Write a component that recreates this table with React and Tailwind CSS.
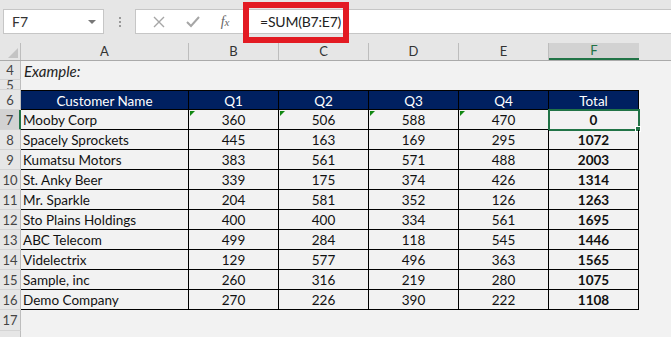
const COLS = [
  { key: "A", w: "w-[168px]" },
  { key: "B", w: "w-[90px]" },
  { key: "C", w: "w-[90px]" },
  { key: "D", w: "w-[90px]" },
  { key: "E", w: "w-[90px]" },
  { key: "F", w: "w-[90px]" },
]

const ROWS = [
  [7, "Mooby Corp", 360, 506, 588, 470, 0],
  [8, "Spacely Sprockets", 445, 163, 169, 295, 1072],
  [9, "Kumatsu Motors", 383, 561, 571, 488, 2003],
  [10, "St. Anky Beer", 339, 175, 374, 426, 1314],
  [11, "Mr. Sparkle", 204, 581, 352, 126, 1263],
  [12, "Sto Plains Holdings", 400, 400, 334, 561, 1695],
  [13, "ABC Telecom", 499, 284, 118, 545, 1446],
  [14, "Videlectrix", 129, 577, 496, 363, 1565],
  [15, "Sample, inc", 260, 316, 219, 280, 1075],
  [16, "Demo Company", 270, 226, 390, 222, 1108],
]

function RowHead({ n, h, active }) {
  return (
    <div
      className={`${h} w-[21px] shrink-0 flex items-center justify-center pt-[2px] overflow-hidden border-b border-[#d4d4d4] text-[13px] text-[#444] ${
        active ? "bg-[#d2d2d2] border-r-2 border-r-[#217346]" : "bg-[#e6e6e6] border-r border-r-[#bdbdbd]"
      }`}
    >
      {n}
    </div>
  )
}

function ErrTri() {
  return (
    <span className="absolute left-[1px] top-[1px] w-0 h-0 border-t-[5px] border-t-[#118811] border-r-[5px] border-r-transparent" />
  )
}

export default function App() {
  return (
    <div className="w-[671px] h-[337px] overflow-hidden bg-[#f2f2f2] font-['Lato','Open_Sans',sans-serif] text-[#222] relative">
      {/* Formula bar */}
      <div className="h-[43px] bg-[#e6e6e6] flex items-start pt-[9px]">
        <div className="ml-[3px] w-[101px] h-[25px] bg-white border border-[#c6c6c6] flex items-center justify-between pl-[8px] pr-[7px]">
          <span className="text-[14px] text-[#333]">F7</span>
          <span className="w-0 h-0 border-l-[4px] border-l-transparent border-r-[4px] border-r-transparent border-t-[4px] border-t-[#777]" />
        </div>
        <div className="w-[31px] h-[25px] flex flex-col items-center justify-center gap-[2px]">
          <span className="w-[2px] h-[2px] bg-[#999]" />
          <span className="w-[2px] h-[2px] bg-[#999]" />
          <span className="w-[2px] h-[2px] bg-[#999]" />
        </div>
        <div className="flex-1 h-[25px] bg-white border border-r-0 border-[#c6c6c6] flex items-center">
          <div className="w-[108px] flex items-center justify-around pl-[6px] pr-[4px]">
            <svg width="12" height="12" viewBox="0 0 12 12" fill="none" stroke="#a6a6a6" strokeWidth="1.4">
              <path d="M1 1l10 10M11 1L1 11" />
            </svg>
            <svg width="14" height="12" viewBox="0 0 14 12" fill="none" stroke="#a6a6a6" strokeWidth="2">
              <path d="M1 6l4 4 8-9" />
            </svg>
            <span className="font-['Liberation_Serif',serif] italic text-[14px] text-[#666]">
              f<span className="text-[11px]">x</span>
            </span>
          </div>
          <span className="ml-[16px] text-[14px] tracking-[-0.2px] text-[#222]">=SUM(B7:E7)</span>
        </div>
      </div>

      {/* red highlight around the formula */}
      <div className="absolute left-[243px] top-[2px] w-[106px] h-[41px] border-[6px] border-[#e31b23]" />

      {/* Column headers */}
      <div className="h-[18px] flex bg-[#e6e6e6] border-b border-[#aaaaaa]">
        <div className="w-[21px] shrink-0 border-r border-[#bdbdbd] relative">
          <span className="absolute right-[2px] bottom-[2px] w-0 h-0 border-b-[10px] border-b-[#c4c4c4] border-l-[10px] border-l-transparent" />
        </div>
        {COLS.map((c) => (
          <div
            key={c.key}
            className={`${c.w} shrink-0 flex items-center justify-center pt-[1px] text-[13px] ${
              c.key === "F"
                ? "bg-[#d2d2d2] border-b-2 border-b-[#217346] text-[#217346]"
                : "border-r border-[#bdbdbd] text-[#333]"
            }`}
          >
            {c.key}
          </div>
        ))}
        <div className="flex-1" />
      </div>

      {/* Row 4 */}
      <div className="h-[19px] flex">
        <RowHead n={4} h="h-[19px]" />
        <div className="pl-[3px] pt-[2px] flex items-center italic text-[15px]">Example:</div>
      </div>
      {/* Row 5 (collapsed) */}
      <div className="h-[10px] flex">
        <RowHead n={5} h="h-[10px]" />
      </div>

      {/* Row 6 header */}
      <div className="h-[20px] flex">
        <RowHead n={6} h="h-[20px]" />
        <div className="flex bg-[#002060] text-white text-[13.5px] border-t border-black">
          {["Customer Name", "Q1", "Q2", "Q3", "Q4", "Total"].map((t, i) => (
            <div
              key={t}
              className={`${COLS[i].w} shrink-0 flex items-center justify-center pt-[2px] border-r border-b border-black`}
            >
              {t}
            </div>
          ))}
        </div>
      </div>

      {ROWS.map((r) => (
        <div key={r[0]} className="h-[20px] flex">
          <RowHead n={r[0]} h="h-[20px]" active={r[0] === 7} />
          <div className="flex text-[13.5px] text-[#111]">
            <div className={`${COLS[0].w} shrink-0 flex items-center pl-[2px] pt-[2px] border-r border-b border-black`}>{r[1]}</div>
            {[2, 3, 4, 5].map((i) => (
              <div key={i} className={`${COLS[i - 1].w} shrink-0 relative flex items-center justify-center pt-[2px] border-r border-b border-black`}>
                {r[0] === 7 && <ErrTri />}
                {r[i]}
              </div>
            ))}
            <div className={`${COLS[5].w} shrink-0 relative flex items-center justify-center pt-[2px] font-bold border-r border-b border-black`}>
              {r[6]}
              {r[0] === 7 && (
                <>
                  <span className="absolute -left-[1px] -top-[1px] w-[92px] h-[22px] border-2 border-[#217346]" />
                  <span className="absolute -right-[3px] -bottom-[3px] w-[6px] h-[6px] bg-[#217346] border border-white" />
                </>
              )}
            </div>
          </div>
        </div>
      ))}

      {/* Row 17 and the next (unlabelled, cut by the window) */}
      <div className="h-[21px] flex">
        <RowHead n={17} h="h-[21px]" />
      </div>
      <div className="h-[20px] flex">
        <RowHead n="" h="h-[20px]" />
      </div>
    </div>
  )
}
